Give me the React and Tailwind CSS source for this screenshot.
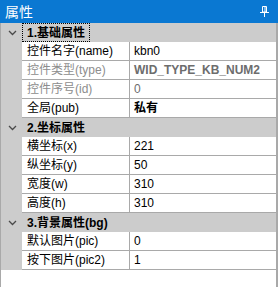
import React from 'react';

const groups = [
  {
    title: '1.基础属性',
    focused: true,
    rows: [
      { name: '控件名字(name)', value: 'kbn0' },
      { name: '控件类型(type)', value: 'WID_TYPE_KB_NUM2', readOnly: true, bold: true },
      { name: '控件序号(id)', value: '0', readOnly: true },
      { name: '全局(pub)', value: '私有', bold: true },
    ],
  },
  {
    title: '2.坐标属性',
    rows: [
      { name: '横坐标(x)', value: '221' },
      { name: '纵坐标(y)', value: '50' },
      { name: '宽度(w)', value: '310' },
      { name: '高度(h)', value: '310' },
    ],
  },
  {
    title: '3.背景属性(bg)',
    rows: [
      { name: '默认图片(pic)', value: '0' },
      { name: '按下图片(pic2)', value: '1' },
    ],
  },
];

function PinIcon() {
  return (
    <svg width="9" height="11" viewBox="0 0 9 11" className="block">
      <path d="M2.5 0.5 H6.5 V6 H2.5 Z" fill="none" stroke="white" strokeWidth="1" />
      <path d="M5 1 V6" stroke="white" strokeWidth="1" />
      <path d="M0 6.5 H9" stroke="white" strokeWidth="1" />
      <path d="M4.5 7 V11" stroke="white" strokeWidth="1" />
    </svg>
  );
}

function Chevron() {
  return (
    <svg width="9" height="6" viewBox="0 0 9 6" className="block">
      <path d="M1 1 L4.5 4.5 L8 1" fill="none" stroke="#4a4a4a" strokeWidth="1.3" />
    </svg>
  );
}

function GroupHeader({ title, focused }) {
  return (
    <div className="flex h-[19px] bg-[#cccccc]">
      <div className="w-[21px] shrink-0 flex items-center justify-center pl-[1px]">
        <Chevron />
      </div>
      <div
        className={
          focused
            ? 'flex items-center px-[4px] border border-dotted border-black h-[19px]'
            : 'flex items-center px-[5px] h-[19px]'
        }
      >
        <span className="text-[12px] font-bold text-black leading-none">{title}</span>
      </div>
    </div>
  );
}

function PropRow({ name, value, readOnly, bold }) {
  return (
    <div className="flex h-[19px]">
      <div className="w-[21px] shrink-0 bg-[#cccccc]" />
      <div className="flex flex-1 border-b border-[#a9a9a9] bg-white">
        <div
          className={
            'w-[108px] shrink-0 flex items-center pl-[5px] border-r border-[#a9a9a9] text-[12px] leading-none ' +
            (readOnly ? 'text-[#8d8d8d]' : 'text-black')
          }
        >
          {name}
        </div>
        <div
          className={
            'flex-1 flex items-center pl-[4px] text-[12px] leading-none ' +
            (readOnly ? 'text-[#6d6d6d] ' : 'text-black ') +
            (bold ? 'font-bold' : '')
          }
        >
          {value}
        </div>
      </div>
    </div>
  );
}

export default function App() {
  return (
    <div className="w-[278px] h-[287px] bg-white flex flex-col font-['Liberation_Sans','Noto_Sans_CJK_SC',sans-serif] overflow-hidden">
      <div className="h-[23px] shrink-0 bg-[#0a78d2] flex items-center justify-between pl-[5px] pr-[9px]">
        <span className="text-[14px] text-white leading-none">属性</span>
        <PinIcon />
      </div>
      <div className="flex-1 flex flex-col border-l border-r-2 border-[#a9a9a9]">
        {groups.map((g) => (
          <div key={g.title}>
            <GroupHeader title={g.title} focused={g.focused} />
            {g.rows.map((r) => (
              <PropRow key={r.name} {...r} />
            ))}
          </div>
        ))}
      </div>
    </div>
  );
}
